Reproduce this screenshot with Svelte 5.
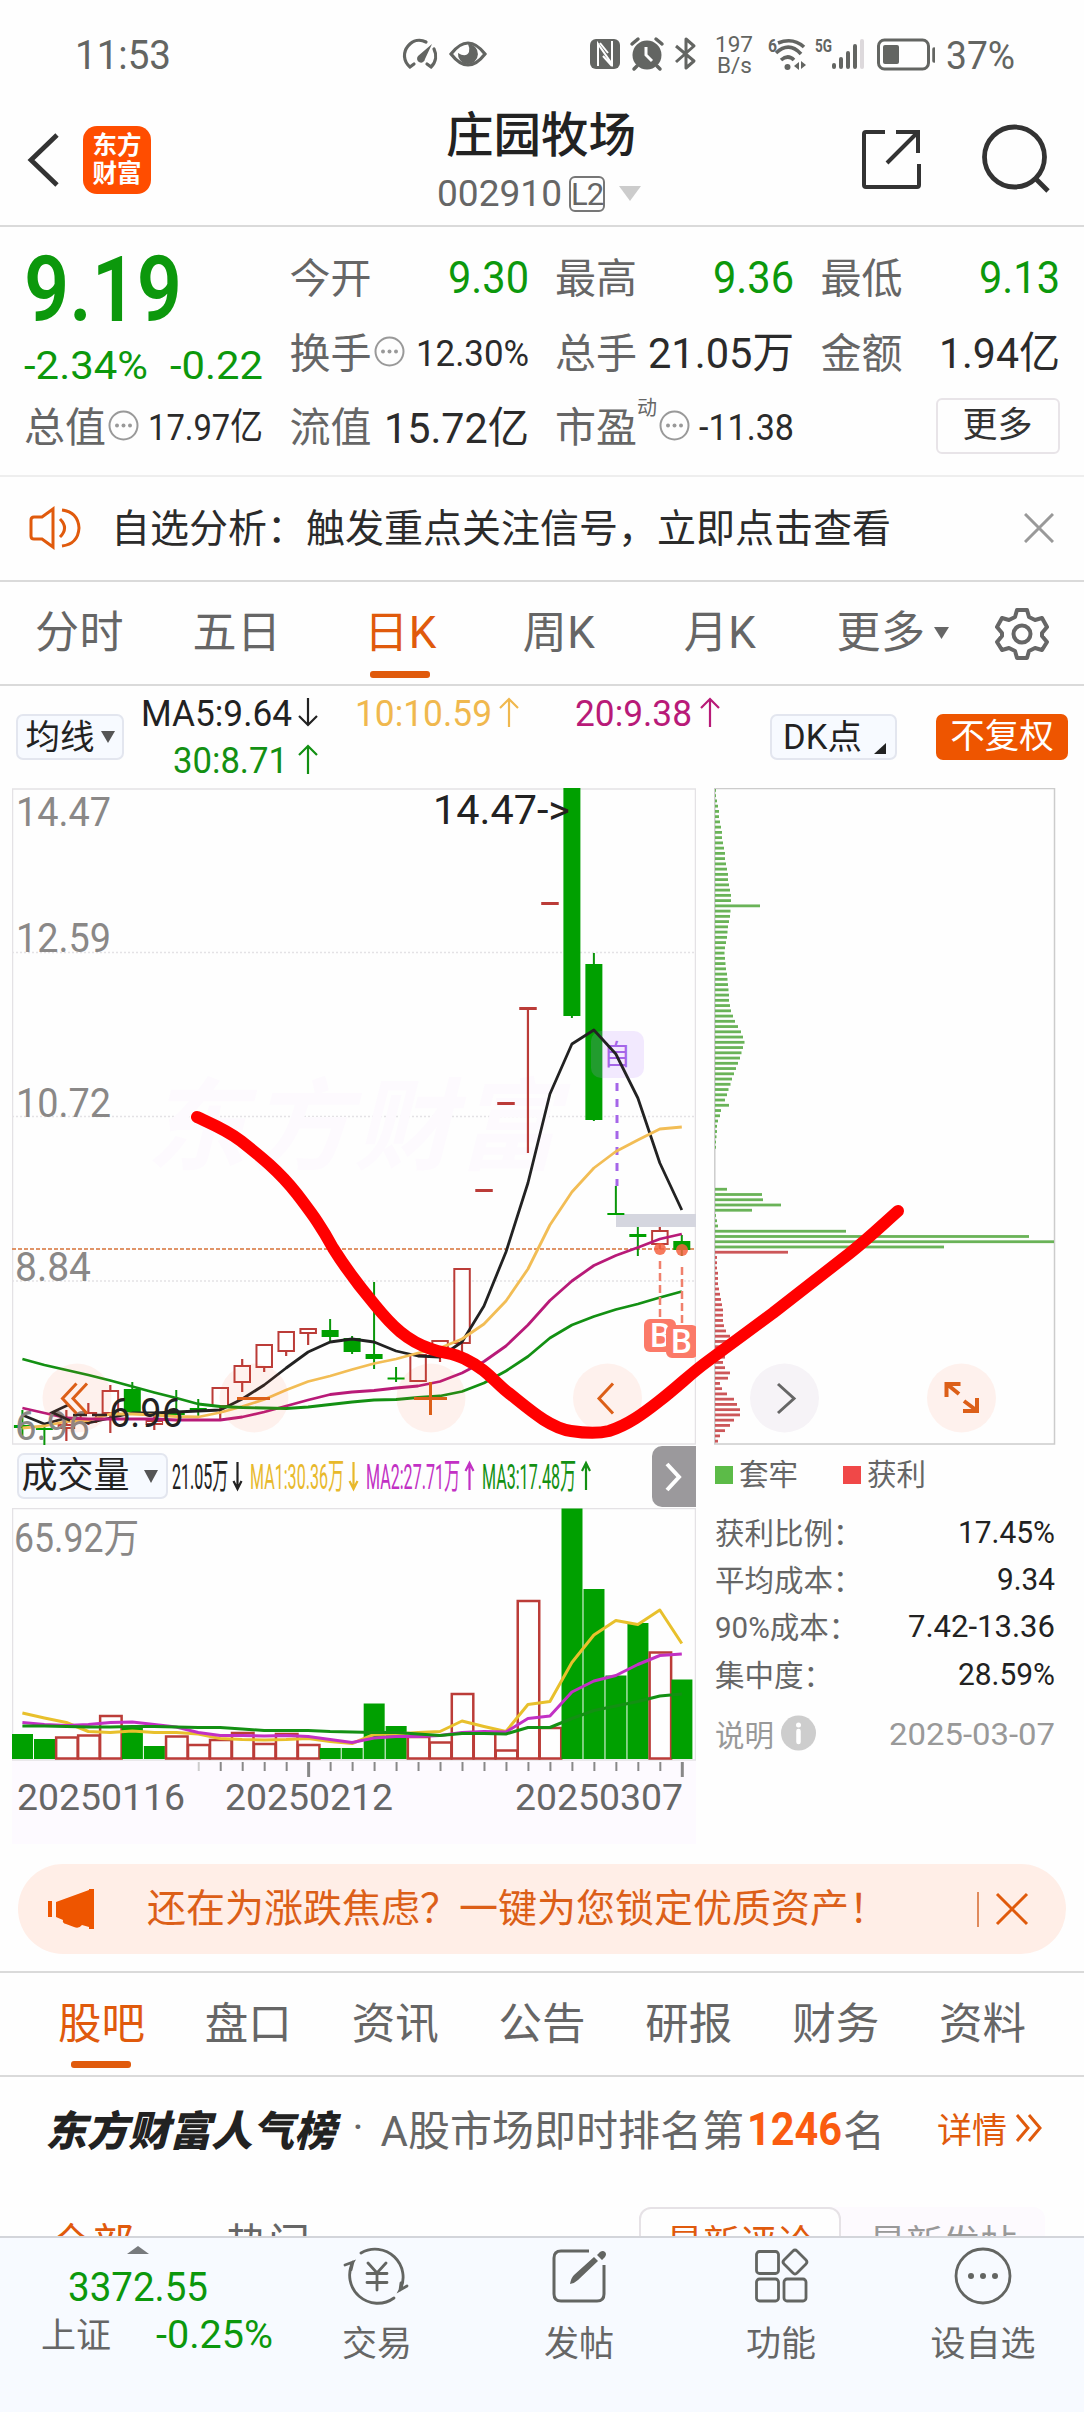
<script>
    const quotes = [
        { label: '今开', value: '9.30', width: 81, size: 44, tone: 'down' },
        { label: '最高', value: '9.36', width: 81, size: 44, tone: 'down' },
        { label: '最低', value: '9.13', width: 81, size: 44, tone: 'down' },
        { label: '换手', value: '12.30%', width: 113, size: 36, tip: true },
        { label: '总手', value: '21.05万', width: 146, size: 43 },
        { label: '金额', value: '1.94亿', width: 121, size: 43 }
    ];

    const periods = [
        { text: '分时', width: 159 },
        { text: '五日', width: 156 },
        { text: '日K', width: 171, active: true },
        { text: '周K', width: 146 },
        { text: '月K', width: 176 }
    ];

    const sections = ['股吧', '盘口', '资讯', '公告', '研报', '财务', '资料'];

    const costs = [
        { label: '获利比例：', value: '17.45%', width: 97 },
        { label: '平均成本：', value: '9.34', width: 58 },
        { label: '90%成本：', value: '7.42-13.36', width: 147 },
        { label: '集中度：', value: '28.59%', width: 97 }
    ];

    // [color, high, body top, body bottom, low]
    const candles = [
        ['g', 1410, 1425, 1428, 1437], ['g', 1425, 1428, 1430, 1445], ['r', 1410, 1425, 1428, 1441],
        ['r', 1403, 1413, 1422, 1425], ['r', 1385, 1391, 1413, 1433], ['g', 1382, 1389, 1412, 1412],
        ['r', 1412, 1421, 1424, 1430], ['g', 1390, 1413, 1415, 1415], ['g', 1399, 1408, 1411, 1416],
        ['r', 1388, 1388, 1406, 1421], ['r', 1359, 1366, 1382, 1392], ['r', 1345, 1345, 1367, 1372],
        ['r', 1332, 1332, 1351, 1356], ['r', 1329, 1329, 1333, 1345], ['g', 1319, 1330, 1337, 1341],
        ['g', 1336, 1338, 1352, 1354], ['g', 1282, 1354, 1359, 1369], ['g', 1367, 1377.5, 1379.5, 1382],
        ['r', 1355, 1355, 1381, 1382], ['r', 1340, 1341, 1355, 1362], ['r', 1269, 1269, 1343, 1353],
        ['r', 1190, 1190, 1191, 1191], ['r', 1103, 1103, 1104, 1104], ['r', 1008, 1008, 1009, 1153],
        ['r', 903, 903, 904, 904], ['g', 788, 788, 1016, 1018], ['g', 953, 964, 1120, 1121],
        ['g', 1186, 1213, 1215, 1215], ['g', 1227, 1234, 1237, 1256], ['r', 1227, 1231, 1244, 1249],
        ['g', 1235, 1241, 1250, 1256]
    ];
    const ma5 = [1415, 1424, 1418, 1423, 1418, 1413, 1413, 1412, 1411, 1410, 1399, 1385, 1368, 1352, 1342, 1339, 1342, 1351, 1356, 1357, 1342, 1306, 1252, 1183, 1094, 1044, 1030, 1054, 1098, 1163, 1210];
    const ma10 = [1428, 1426, 1421.5, 1420.5, 1414, 1414, 1415, 1416.5, 1417, 1412.5, 1406.5, 1399.5, 1390, 1381.5, 1376, 1369.5, 1363.5, 1359, 1353, 1348, 1339, 1324, 1301, 1269, 1225, 1192, 1168, 1151.5, 1140, 1129, 1127];
    const ma20 = [1408, 1413, 1418, 1419, 1419, 1419, 1419, 1420, 1420, 1420, 1417, 1412, 1406, 1400, 1394.5, 1392, 1390.5, 1388, 1386, 1381.5, 1373, 1361.5, 1346, 1325, 1300.5, 1281, 1265.5, 1255.5, 1247.5, 1239, 1234];
    const ma30 = [1359, 1365, 1370, 1375, 1380.5, 1386.5, 1392.5, 1398, 1404, 1406.5, 1407.5, 1408, 1408.5, 1407, 1404.5, 1402, 1400, 1399.5, 1397.5, 1396, 1391.5, 1383, 1371, 1356.5, 1338, 1325, 1316.5, 1309.5, 1304, 1297.5, 1291.5];

    const volumes = [1734, 1739, 1737.5, 1735.5, 1716, 1727, 1746, 1736.5, 1745, 1740, 1733, 1744, 1734, 1745, 1748, 1748, 1703.5, 1726, 1737, 1742.5, 1694, 1733.5, 1750.5, 1601, 1728, 1508.5, 1589, 1675.5, 1623, 1652.5, 1679.5];
    const volumeColors = 'ggrrrggrrrrrrrggggrrrrrrrggggrg';
    const vma1 = [1713, 1718, 1722.5, 1731.5, 1732.5, 1731, 1732.5, 1732.5, 1734, 1738.5, 1739.5, 1740, 1739.5, 1738.5, 1741.5, 1743.5, 1734.5, 1734, 1732.5, 1731.5, 1721, 1726.5, 1731.5, 1704.5, 1701.5, 1662.5, 1635, 1620.5, 1624.5, 1610, 1643.5];
    const vma2 = [1722.5, 1724.5, 1725.5, 1724.5, 1722.5, 1722, 1724.5, 1727, 1732.5, 1735.5, 1735.5, 1736, 1735.5, 1736.5, 1739.5, 1742.5, 1738, 1736.5, 1736.5, 1735.5, 1732.5, 1731.5, 1732, 1718.5, 1716, 1692, 1681, 1675.5, 1664.5, 1655.5, 1654];
    const vma3 = [1726, 1726, 1726.5, 1727, 1727, 1726.5, 1726.5, 1727, 1727.5, 1727.5, 1729, 1730.5, 1730.5, 1730.5, 1731.5, 1732, 1732.5, 1732.5, 1734, 1735.5, 1733.5, 1733.5, 1734, 1727.5, 1727.5, 1718.5, 1710.5, 1706, 1701.5, 1696, 1694];

    // chip distribution, one bar per price step from the top
    const trapped = [
        1, 1, 2, 3, 4, 4, 5, 6, 7, 7, 8, 9, 10, 10, 11, 12, 13, 13, 14, 15, 16, 16, 45,
        15.5, 15, 14, 13, 12.5, 12, 11, 10, 9.5, 10, 10.5, 11, 12, 12.5, 13, 13.5, 14, 14, 15,
        16, 18, 20, 23, 26, 28, 29.5, 28, 26.5, 25, 23, 21, 19, 17, 15.5, 13.5, 12, 10, 14,
        6, 5, 3, 2, 2, 1.5, 1, 1, 0, 0, 0, 0, 0, 0, 0, 12, 47, 48, 66, 37, 1, 2, 3, 131, 314, 339, 229
    ];
    const profit = [73, 2, 2, 2, 3, 3, 3, 4, 5, 6, 7, 8, 8, 8, 9, 11, 15, 16, 14, 12, 10, 8, 10, 15, 13, 5, 7, 12, 19, 22, 25, 25, 19, 15, 10, 5, 3];
    const chips = [...trapped, ...profit];

    const x = (i) => 22.4 + 21.98 * i;
    const line = (ys) => ys.map((y, i) => `${x(i)},${y}`).join(' ');
</script>

{#snippet num(text, width, size)}
    <svg class="num" {width} height={size * 0.71} font-size={size}>
        <text x="0" y={size * 0.71} textLength={width} lengthAdjust="spacingAndGlyphs">{text}</text>
    </svg>
{/snippet}

{#snippet dots()}
    <svg class="dots" width="31" height="31" viewBox="0 0 31 31">
        <circle cx="15.5" cy="15.5" r="14" fill="none" stroke="#999" stroke-width="2" />
        <g fill="#999"><circle cx="9" cy="15.5" r="2" /><circle cx="15.5" cy="15.5" r="2" /><circle cx="22" cy="15.5" r="2" /></g>
    </svg>
{/snippet}

<div class="app">
    <div class="status">
        {@render num('11:53', 96, 40)}
        <svg class="status-mid" width="86" height="32" viewBox="402 38 86 32" fill="none" stroke="#636562" stroke-width="3.2" stroke-linecap="round">
            <path d="M414 64l-4 3C403 61 403 52 408 46S420 39 426 42M434 49C437 55 436 62 431 67l-4-3" />
            <path d="M432 44l-7 15a4 4 0 1 1-7-3z" fill="#636562" stroke="none" />
            <path d="M451 54Q468 32 485 54Q468 76 451 54z" />
            <path d="M468 44a10 10 0 1 1-10 9q8 5 11-1q1-4-1-8z" fill="#636562" stroke="none" />
        </svg>
        <svg class="status-icons" width="350" height="60" viewBox="585 25 350 60" fill="none" stroke="#636562">
            <rect x="590" y="39" width="30" height="30" rx="6" fill="#636562" stroke="none" />
            <path d="M598 66V44l14 20V41M600 43l8 10M603 56l9 10" stroke="#fff" stroke-width="2" />
            <circle cx="647" cy="55" r="14.5" fill="#636562" stroke="none" />
            <path d="M646 47v8l6 6" stroke="#fff" stroke-width="3" />
            <path d="M632 44l6-5M662 44l-6-5M637 66l-3 3M657 66l3 3" stroke-width="3.5" stroke-linecap="round" />
            <path d="M676 46l18 15l-8 7V39l8 7l-18 16" stroke-width="3" stroke-linejoin="round" />
            <g fill="#636562" stroke="none" font-size="23">
                <text x="715" y="51.500" font-size="22.500" textLength="38" lengthAdjust="spacingAndGlyphs">197</text>
                <text x="717" y="73" font-size="22.500" textLength="35" lengthAdjust="spacingAndGlyphs">B/s</text>
                <text class="tiny" x="768" y="52" font-size="19" textLength="9" lengthAdjust="spacingAndGlyphs">6</text>
                <text class="tiny" x="815" y="52" font-size="19" textLength="17" lengthAdjust="spacingAndGlyphs">5G</text>
            </g>
            <path d="M778 43q15-6 26 4M776 53q13-12 25 1M781 60q7-6 13 0" stroke-width="3.6" />
            <circle cx="787.500" cy="67" r="3" fill="#636562" stroke="none" />
            <path d="M799 62v8l-5-4zM801 61v8l5-4z" fill="#636562" stroke="none" />
            <path d="M834 65v2M841 59v8M848 53v14M855 46v21" stroke-width="4" stroke-linecap="round" />
            <path d="M862 41v26" stroke="#ddd9dc" stroke-width="4" stroke-linecap="round" />
            <rect x="878.500" y="40" width="50" height="29" rx="6" stroke-width="3" />
            <rect x="883" y="45" width="16" height="19" rx="2" fill="#636562" stroke="none" />
            <path d="M934 49v12" stroke-width="3.500" stroke-linecap="round" />
        </svg>
        <div class="battery">{@render num('37%', 69, 38)}</div>
    </div>

    <div class="header">
        <svg class="back" width="33" height="56" viewBox="0 0 33 56"><path d="M30 3L4 28l26 25" fill="none" stroke="#333" stroke-width="4.800" /></svg>
        <div class="logo"><span>东方</span><span>财富</span></div>
        <div class="title">
            <div class="name">庄园牧场</div>
            <div class="code">
                {@render num('002910', 125, 37)}
                <span class="level">L2</span>
                <svg width="22" height="15"><path d="M0 0h22L11 15z" fill="#ccc" /></svg>
            </div>
        </div>
        <svg class="share" width="60" height="60" viewBox="0 0 60 60" fill="none" stroke="#333" stroke-width="4">
            <path d="M24 3H5q-2 0-2 2v51q0 2 2 2h51q2 0 2-2V35M35 3h22v21M57 3L26 34" />
        </svg>
        <svg class="search" width="70" height="70" viewBox="0 0 70 70" fill="none" stroke="#333" stroke-width="4.800">
            <circle cx="32.500" cy="33" r="30" /><path d="M53 54l13 13" />
        </svg>
    </div>

    <div class="quote">
        <div class="price-cell">
            <div class="price down">{@render num('9.19', 158, 91)}</div>
            <div class="change down">{@render num('-2.34%', 124, 39)}{@render num('-0.22', 93, 39)}</div>
        </div>
        {#each quotes as q}
            <div class="cell">
                <span class="label">{q.label}</span>
                {#if q.tip}{@render dots()}{/if}
                <span class="value {q.tone}">{@render num(q.value, q.width, q.size)}</span>
            </div>
        {/each}
        <div class="cell"><span class="label">总值</span>{@render dots()}<span class="value">{@render num('17.97亿', 115, 37)}</span></div>
        <div class="cell"><span class="label">流值</span><span class="value">{@render num('15.72亿', 145, 43)}</span></div>
        <div class="cell"><span class="label">市盈</span><sup>动</sup>{@render dots()}<span class="value">{@render num('-11.38', 95, 36)}</span></div>
        <div class="cell end"><button class="more">更多</button></div>
    </div>

    <div class="notice">
        <svg width="53" height="44" viewBox="0 0 53 44" fill="none" stroke="#e05a0c" stroke-width="3">
            <path d="M25 3v38l-11-8H6q-3 0-3-3V14q0-3 3-3h8zM32 13q9 9 0 18M34 4q16 2 17 18q-1 16-17 18" />
        </svg>
        <span class="notice-text">自选分析：触发重点关注信号，立即点击查看</span>
        <svg class="close" width="30" height="30" viewBox="0 0 30 30"><path d="M1 1l28 28M29 1L1 29" stroke="#999" stroke-width="3" /></svg>
    </div>

    <div class="periods">
        {#each periods as p}
            <div class="period" class:active={p.active} style="width: {p.width}px"><span>{p.text}</span></div>
        {/each}
        <div class="period more-period"><span>更多</span><svg width="15" height="12"><path d="M0 0h15L7.500 12z" fill="#666" /></svg></div>
        <svg class="gear" width="54" height="54" viewBox="-27 -27 54 54" fill="none" stroke="#666" stroke-width="4" stroke-linejoin="round">
            <path d="M-5-24H5L7-17L13-14L20-16L25-7L20-1V2L25 8L20 16L13 14L7 17L5 24H-5L-7 17L-13 14L-20 16L-25 8L-20 2V-1L-25-7L-20-16L-13-14L-7-17Z" />
            <circle r="8.500" />
        </svg>
    </div>

    <div class="ma-row">
        <div class="chip ma-chip">均线<svg width="14" height="12"><path d="M0 0h14L7 12z" fill="#555" /></svg></div>
        <svg class="ma-values" width="584" height="100" viewBox="136 686 584 100" font-size="37">
            <g fill="#222"><text x="141" y="725.500" textLength="151" lengthAdjust="spacingAndGlyphs">MA5:9.64</text><path class="arrow" d="M308 698v27m-9-9l9 9l9-9" stroke="#222" /></g>
            <g fill="#f0b84e"><text x="355" y="725.500" textLength="137" lengthAdjust="spacingAndGlyphs">10:10.59</text><path class="arrow" d="M509 727v-28m-9 9l9-9l9 9" stroke="#f0b84e" /></g>
            <g fill="#b81a78"><text x="575" y="725.500" textLength="117" lengthAdjust="spacingAndGlyphs">20:9.38</text><path class="arrow" d="M710 727v-28m-9 9l9-9l9 9" stroke="#b81a78" /></g>
            <g fill="#139013"><text x="173" y="773" textLength="115" lengthAdjust="spacingAndGlyphs">30:8.71</text><path class="arrow" d="M308 774v-28m-9 9l9-9l9 9" stroke="#139013" /></g>
        </svg>
        <div class="chip dk-chip">DK点<svg width="12" height="11"><path d="M12 0v11H0z" fill="#222" /></svg></div>
        <div class="chip solid">不复权</div>
    </div>

    <div class="charts">
        <div class="left">
            <svg class="kline" width="684" height="657" viewBox="12 788 684 657">
                <g fill="none" stroke="#e4e2e5" stroke-width="1.500">
                    <rect x="12.500" y="789" width="683" height="655" />
                    <path d="M12 952.500h684M12 1116.500h684M12 1281h684" stroke-dasharray="2 2" />
                </g>
                <text class="mark" x="146" y="1162" textLength="412">东方财富</text>
                <path d="M12 1249h684" stroke="#e09468" stroke-width="2" stroke-dasharray="4 2" />
                <rect x="616" y="1214" width="80" height="13" fill="#d5d6df" />
                {#each candles as [color, high, top, bottom, low], i}
                    {#if color === 'g'}
                        <path d="M{x(i)} {high}V{low}" stroke="#0a960a" stroke-width="2" />
                        <rect x={x(i) - 8.5} y={top} width="17" height={bottom - top} fill="#00a000" />
                    {:else}
                        <path d="M{x(i)} {high}V{top}M{x(i)} {bottom}V{low}" stroke="#bb3c38" stroke-width="2.200" />
                        <rect x={x(i) - 7.7} y={top} width="15.500" height={bottom - top} fill="#fff" stroke="#bb3c38" stroke-width="2" />
                    {/if}
                {/each}
                <rect x="591" y="1031" width="53" height="47" rx="10" fill="#be8cff" fill-opacity="0.18" />
                <text x="603" y="1065" font-size="28" fill="#a566e8">自</text>
                <path d="M617 1083v103" stroke="#a566e8" stroke-width="3" stroke-dasharray="8 8" />
                <g fill="none" stroke-width="2.800" stroke-linejoin="round">
                    <polyline points={line(ma5)} stroke="#222" />
                    <polyline points={line(ma10)} stroke="#f2bd55" />
                    <polyline points={line(ma20)} stroke="#b81a78" />
                    <polyline points={line(ma30)} stroke="#139013" />
                </g>
                <g fill="#8a8887" font-size="40">
                    <text x="16" y="826" textLength="95" lengthAdjust="spacingAndGlyphs">14.47</text>
                    <text x="16" y="952" textLength="95" lengthAdjust="spacingAndGlyphs">12.59</text>
                    <text x="16" y="1117" textLength="95" lengthAdjust="spacingAndGlyphs">10.72</text>
                    <text x="15" y="1281" textLength="76" lengthAdjust="spacingAndGlyphs">8.84</text>
                    <text x="15" y="1440" textLength="75" lengthAdjust="spacingAndGlyphs">6.96</text>
                </g>
                <text x="433" y="824" font-size="40" fill="#222" textLength="137" lengthAdjust="spacingAndGlyphs">14.47-&gt;</text>
                <path d="M68 1405l-16 7.500l18 8M73 1415h14m5 0h15" fill="none" stroke="#222" stroke-width="2.500" />
                <text x="109" y="1427" font-size="40" fill="#222" textLength="74" lengthAdjust="spacingAndGlyphs">6.96</text>
                <g fill="#f4613f" fill-opacity="0.85"><circle cx="660" cy="1249" r="6" /><circle cx="682" cy="1250" r="6" /></g>
                <path d="M660 1261v57M682 1267v57" stroke="#f0806c" stroke-width="2.500" stroke-dasharray="8 4" />
                <g class="buy">
                    <rect x="644" y="1319" width="32" height="33" rx="6" /><text x="650" y="1347">B</text>
                    <rect x="666" y="1325" width="32" height="33" rx="6" /><text x="671" y="1353">B</text>
                </g>
            </svg>

            <div class="vol-row">
                <div class="chip vol-chip">成交量<svg width="14" height="13"><path d="M0 0h14L7 13z" fill="#555" /></svg></div>
                <svg width="480" height="60" viewBox="172 1446 480 60" font-size="36">
                    <g fill="#222"><text transform="translate(172 1489) scale(.445 1)">21.05万</text><path class="arrow" d="M237.500 1462v27m-4-8l4 8l4-8" stroke="#222" /></g>
                    <g fill="#e8b92c"><text transform="translate(250 1489) scale(.447 1)">MA1:30.36万</text><path class="arrow" d="M353.500 1462v27m-4-8l4 8l4-8" stroke="#e8b92c" /></g>
                    <g fill="#c231c4"><text transform="translate(366 1489) scale(.447 1)">MA2:27.71万</text><path class="arrow" d="M469.500 1490v-27m-4 8l4-8l4 8" stroke="#c231c4" /></g>
                    <g fill="#139013"><text transform="translate(482 1489) scale(.447 1)">MA3:17.48万</text><path class="arrow" d="M586 1490v-27m-4 8l4-8l4 8" stroke="#139013" /></g>
                </svg>
                <div class="handle"><svg width="18" height="30" viewBox="0 0 18 30"><path d="M2 2l12 13L2 28" fill="none" stroke="#fff" stroke-width="4" /></svg></div>
            </div>

            <svg class="volume" width="684" height="336" viewBox="12 1508 684 336">
                <rect x="12" y="1760" width="684" height="84" fill="#fdfaff" />
                <rect x="12.500" y="1508.500" width="683" height="251.500" fill="#fefefe" stroke="#e4e2e5" stroke-width="1.500" />
                <text x="14" y="1552" font-size="40" fill="#8a8887" textLength="125" lengthAdjust="spacingAndGlyphs">65.92万</text>
                {#each volumes as top, i}
                    {#if volumeColors[i] === 'g'}
                        <rect x={x(i) - 10.4} y={top} width="21" height={1759 - top} fill="#00a000" />
                    {:else}
                        <rect x={x(i) - 10.2} y={top} width="21.500" height={1758.5 - top} fill="#fefefe" stroke="#bb3c38" stroke-width="2.500" />
                    {/if}
                {/each}
                <g fill="none" stroke-width="3" stroke-linejoin="round">
                    <polyline points={line(vma1)} stroke="#e8c02c" />
                    <polyline points={line(vma2)} stroke="#c231c4" />
                    <polyline points={line(vma3)} stroke="#139013" />
                </g>
                {#each volumes as _, i}
                    {#if i > 7}
                        <path d="M{x(i) + 0.5} 1762v{i === 13 || i === 30 ? 15 : 9}" stroke={i === 8 ? '#ccc' : '#888'} stroke-width={i === 13 || i === 30 ? 3 : 2} />
                    {/if}
                {/each}
                <g font-size="37" fill="#666">
                    <text x="17" y="1810" textLength="168" lengthAdjust="spacingAndGlyphs">20250116</text>
                    <text x="225" y="1810" textLength="168" lengthAdjust="spacingAndGlyphs">20250212</text>
                    <text x="515" y="1810" textLength="168" lengthAdjust="spacingAndGlyphs">20250307</text>
                </g>
            </svg>
        </div>

        <div class="right">
            <svg width="342" height="657" viewBox="714 788 342 657">
                <rect x="714.800" y="788.500" width="339.700" height="655.500" fill="none" stroke="#ccc" stroke-width="1.500" />
                {#each chips as length, k}
                    <rect x="715" y={789 + k * 5.248} width={length} height="2.800" fill={k < trapped.length ? '#6ab358' : '#cc5759'} />
                {/each}
            </svg>
            <div class="legend"><i class="green"></i>套牢<i class="red"></i>获利</div>
            {#each costs as c}
                <div class="cost"><span>{c.label}</span><b>{@render num(c.value, c.width, 31)}</b></div>
            {/each}
            <div class="cost note">
                <span>说明</span>
                <svg class="info" width="35" height="36" viewBox="0 0 35 36"><circle cx="17.500" cy="18" r="17.500" fill="#cdcdcd" /><circle cx="17.500" cy="10" r="2.500" fill="#fff" /><path d="M17.500 16v11" fill="none" stroke="#fff" stroke-width="4.500" stroke-linecap="round" /></svg>
                <b>{@render num('2025-03-07', 166, 31.5)}</b>
            </div>
        </div>

        <svg class="overlay" width="1084" height="656" viewBox="0 788 1084 656" fill="none">
            <g fill="#ff5a28" fill-opacity="0.08">
                <circle cx="77" cy="1398" r="34.500" /><circle cx="254" cy="1398" r="34.500" /><circle cx="431" cy="1398" r="34.500" /><circle cx="607.500" cy="1398" r="34.500" /><circle cx="961.500" cy="1398" r="34.500" />
            </g>
            <circle cx="784.500" cy="1398" r="34.500" fill="#f6f3f7" />
            <g stroke="#dc5f18" stroke-width="3">
                <path d="M76.500 1383.500l-14 15l14 15M87 1383.500l-14 15l14 15M237 1398.500h33M414 1398.500h33M430.500 1382v33M613 1383.500l-14 15l14 15" />
                <path d="M946.500 1397v-13h14M948 1385l11 9M964 1401l12 9M963 1411h14v-13" stroke-width="4" />
            </g>
            <path d="M778 1384l16 14.500l-16 14.500" stroke="#666" stroke-width="3" />
            <path d="M197 1117C212 1124 227 1130 241 1141C260 1156 279 1171 297 1194C312 1214 320 1224 333 1248C348 1272 359 1286 375 1305C392 1326 407 1341 431 1349C445 1354 452 1352 465 1359C488 1370 496 1384 510 1394C530 1410 550 1428 571 1431C584 1433 597 1434 609 1431C628 1425 644 1413 658 1402C680 1385 690 1374 708 1361L773 1313L850 1253C870 1237 880 1227 898 1211" stroke="#f00" stroke-width="12" stroke-linecap="round" stroke-linejoin="round" />
        </svg>
    </div>

    <div class="banner">
        <svg width="48" height="40" viewBox="0 0 48 40" fill="#ee5500"><path d="M1 12h4v16H1zM9 13L42 1V0h5v40h-5v-2l-7-2q-3 4-8 2l-8-3q-4-1-3-4l-7-3z" /></svg>
        <span class="banner-text">还在为涨跌焦虑？一键为您锁定优质资产！</span>
        <span class="divider"></span>
        <svg width="34" height="34" viewBox="0 0 34 34"><path d="M2 2l30 30M32 2L2 32" stroke="#e05a0c" stroke-width="3" /></svg>
    </div>

    <div class="sections">
        {#each sections as name, i}
            <div class="section" class:active={i === 0}><span>{name}</span></div>
        {/each}
    </div>

    <div class="rank">
        <span class="rank-title">东方财富人气榜</span>
        <span class="dot">·</span>
        <span>A股市场即时排名第</span>
        <span class="rank-no">{@render num('1246', 95, 47)}</span>
        <span>名</span>
        <span class="detail">详情<svg width="29" height="30" viewBox="0 0 29 30"><path d="M2 2l11 13L2 28M14 2l11 13l-11 13" fill="none" stroke="#e05a0c" stroke-width="3" /></svg></span>
    </div>

    <div class="filters">
        <span class="filter on">全部</span>
        <span class="filter">热门</span>
        <div class="sort"><span class="sort-item on">最新评论</span><span class="sort-item">最新发帖</span></div>
    </div>

    <div class="nav">
        <div class="index">
            <svg width="22" height="8"><path d="M0 8L11 0l11 8z" fill="#777a7d" /></svg>
            <div class="down">{@render num('3372.55', 140, 41)}</div>
            <div class="index-row"><span>上证</span><span class="down">{@render num('-0.25%', 117, 38)}</span></div>
        </div>
        <div class="nav-item">
            <svg width="68" height="60" viewBox="-34 -30 68 60" fill="none" stroke="#636562" stroke-width="2.800" stroke-linecap="round">
                <path d="M-16-23A28 28 0 0 1 23 14l7-4M23 14l1-7M17 22A28 28 0 0 1-24-14l-8 3M-24-14l-2 8M-9-13L0-3L9-13M-10-2.500h20M-10 6.500h20M0-3v17" />
            </svg>
            <span>交易</span>
        </div>
        <div class="nav-item">
            <svg width="68" height="60" viewBox="-34 -30 68 60" fill="none" stroke="#636562" stroke-width="3">
                <path d="M10-25H-18q-7 0-7 7V18q0 7 7 7H18q7 0 7-7V-11" />
                <path d="M-9 8q1-6 4-9L15-19l4 4L-1 4q-3 3-8 4zM18-21l3-3q3-2 5 0q2 2 0 5l-3 3z" fill="#636562" stroke="none" />
            </svg>
            <span>发帖</span>
        </div>
        <div class="nav-item">
            <svg width="68" height="60" viewBox="-34 -30 68 60" fill="none" stroke="#636562" stroke-width="2.800" stroke-linejoin="round">
                <rect x="-24.500" y="-24.500" width="22" height="22" rx="3" /><rect x="-24.500" y="3" width="22" height="22" rx="3" /><rect x="3" y="3" width="22" height="22" rx="3" />
                <path d="M12-25q2-2 4 0l9 9q2 2 0 4l-9 9q-2 2-4 0l-9-9q-2-2 0-4z" />
            </svg>
            <span>功能</span>
        </div>
        <div class="nav-item">
            <svg width="68" height="60" viewBox="-34 -30 68 60"><circle r="27" fill="none" stroke="#636562" stroke-width="2.800" /><g fill="#636562"><circle cx="-12" r="3" /><circle r="3" /><circle cx="12" r="3" /></g></svg>
            <span>设自选</span>
        </div>
    </div>
</div>

<style>
    :global(body) {
        margin: 0;
        background: #fefefe;
    }
    .app {
        width: 1084px;
        height: 2412px;
        overflow: hidden;
        background: #fefefe;
        color: #666;
        font-family: Roboto, "Noto Sans CJK SC", sans-serif;
        box-sizing: border-box;
    }
    .app * {
        box-sizing: border-box;
    }
    svg {
        display: block;
        flex: none;
    }
    svg text {
        white-space: pre;
    }
    .num {
        overflow: visible;
        fill: currentColor;
    }
    .down {
        color: #0c980c;
    }
    .arrow {
        fill: none;
        stroke-width: 2.2;
    }
    .tiny {
        font-weight: 700;
    }

    .status {
        display: flex;
        align-items: center;
        height: 110px;
        padding-left: 75px;
        color: #636562;
    }
    .status-mid {
        margin: 0 0 2px 231px;
    }
    .status-icons {
        margin-left: 97px;
    }
    .battery {
        margin-left: 11px;
    }

    .header {
        display: flex;
        align-items: center;
        height: 117px;
        padding: 0 32px 16px 27px;
        border-bottom: 2px solid #dadada;
    }
    .back {
        margin-top: 1px;
    }
    .logo {
        display: flex;
        flex-direction: column;
        align-items: center;
        justify-content: center;
        width: 68px;
        height: 68px;
        margin: 0 0 0 23px;
        border-radius: 14px;
        background: #ff4d00;
        color: #fff;
        font-size: 24.5px;
        font-weight: 700;
        line-height: 28px;
    }
    .title {
        width: 200px;
        margin-left: 286px;
        padding-top: 10px;
    }
    .name {
        padding-left: 9px;
        color: #222;
        font-size: 47.5px;
        font-weight: 500;
        line-height: 58px;
        white-space: nowrap;
    }
    .code {
        display: flex;
        align-items: center;
        height: 58px;
    }
    .level {
        width: 41px;
        height: 36px;
        margin: 0 11px 0 7px;
        border: 2px solid #777;
        border-radius: 6px;
        font-size: 31px;
        line-height: 33px;
        letter-spacing: -1px;
        text-align: center;
    }
    .code svg:last-child {
        margin-left: 3px;
    }
    .share {
        margin: 0 0 1px 224px;
    }
    .search {
        margin: 0 0 1px 61px;
    }

    .quote {
        display: grid;
        grid-template-columns: 239px 239px 239px 239px;
        grid-template-rows: 75px 75px 74px;
        column-gap: 26.5px;
        height: 250px;
        padding: 13px 23px 0 24px;
        border-bottom: 2px solid #eee;
    }
    .price-cell {
        grid-row: span 2;
    }
    .price {
        padding: 16px 0 0 0;
        font-weight: 600;
    }
    .change {
        display: flex;
        justify-content: space-between;
        margin-top: 30px;
    }
    .cell {
        display: flex;
        align-items: center;
        white-space: nowrap;
    }
    .label {
        margin-top: -6px;
        font-size: 41px;
    }
    .dots {
        margin: -3px 0 0 2px;
    }
    sup {
        align-self: flex-start;
        width: 20px;
        margin-top: 6px;
        font-size: 20px;
        line-height: 24px;
    }
    .value {
        margin-left: auto;
        color: #2b2b2b;
    }
    .value.down {
        color: #0c980c;
    }
    .end {
        justify-content: flex-end;
    }
    .more {
        width: 124px;
        height: 56px;
        margin-top: -3px;
        padding: 0;
        border: 2px solid #e8e4e8;
        border-radius: 6px;
        background: #fefefe;
        color: #333;
        font: inherit;
        font-size: 35px;
        line-height: 48px;
    }

    .notice {
        display: flex;
        align-items: center;
        height: 105px;
        padding: 0 30px 2px 28px;
        border-bottom: 2px solid #dadada;
    }
    .notice-text {
        flex: 1;
        padding: 0 0 5px 30px;
        color: #2b2b2b;
        font-size: 39px;
    }

    .periods {
        display: flex;
        height: 104px;
        border-bottom: 2px solid #dadada;
        font-size: 44px;
        line-height: 105px;
    }
    .period {
        display: flex;
        flex: none;
        justify-content: center;
        align-items: center;
        letter-spacing: 0.5px;
    }
    .active span {
        position: relative;
        color: #e05a0c;
    }
    .active span::after {
        content: '';
        position: absolute;
        bottom: 8px;
        left: 50%;
        width: 60px;
        height: 7px;
        margin-left: -30px;
        border-radius: 3px;
        background: #e05a0c;
    }
    .more-period {
        gap: 8px;
        width: 169px;
    }
    .gear {
        margin: 25px 0 0 18px;
    }

    .ma-row {
        display: flex;
        align-items: flex-start;
        height: 102px;
        padding-left: 16px;
    }
    .chip {
        display: flex;
        align-items: center;
        justify-content: center;
        height: 46px;
        margin-top: 28px;
        border: 2px solid #e3e6ef;
        border-radius: 7px;
        background: #f7faff;
        color: #222;
        font-size: 34.5px;
        line-height: 42px;
        white-space: nowrap;
    }
    .ma-chip {
        gap: 6px;
        width: 108px;
    }
    .ma-values {
        margin: 0 0 0 12px;
    }
    .dk-chip {
        gap: 12px;
        width: 127px;
        margin-left: 50px;
        padding-left: 2px;
    }
    .dk-chip svg {
        margin-top: 22px;
    }
    .solid {
        width: 132px;
        margin-left: 39px;
        padding-bottom: 2px;
        border: 0;
        background: #ee5500;
        color: #fff;
        line-height: 44px;
    }

    .charts {
        position: relative;
        display: flex;
        height: 1056px;
        padding-left: 12px;
    }
    .left {
        width: 684px;
    }
    .overlay {
        position: absolute;
        top: 0;
        left: 0;
    }
    .mark {
        fill: #fdfafe;
        font-size: 100px;
        font-weight: 700;
        font-style: italic;
    }
    .buy rect {
        fill: #fb7a68;
    }
    .buy text {
        fill: #fff;
        font-size: 33px;
        font-weight: 500;
    }
    .vol-row {
        display: flex;
        height: 63px;
    }
    .vol-chip {
        gap: 14px;
        width: 151px;
        margin: 8px 4px 0 5px;
        padding: 0 6px 0 0;
        font-size: 36px;
    }
    .handle {
        display: flex;
        align-items: center;
        justify-content: center;
        width: 44px;
        height: 61px;
        margin: 1px 0 0 0;
        border-radius: 10px 0 0 10px;
        background: #9b999c;
    }
    .vol-row > svg {
        margin-top: 1px;
    }

    .right {
        width: 342px;
        margin-left: 18px;
    }
    .legend {
        display: flex;
        align-items: center;
        height: 58px;
        padding-bottom: 4px;
        font-size: 29.5px;
    }
    .legend i {
        width: 18px;
        height: 18px;
        margin: 5px 6px 0 1px;
    }
    .green {
        background: #5cbb48;
    }
    .legend .red {
        margin-left: 45px;
        background: #f04848;
    }
    .cost {
        display: flex;
        align-items: center;
        height: 47.3px;
        padding: 8px 0 0 1px;
        font-size: 29.5px;
    }
    .cost b {
        margin-left: auto;
        padding: 2px 1px 0 0;
        color: #222;
        font-weight: 400;
    }
    .note,
    .note b {
        color: #999;
    }
    .note {
        height: 67px;
        padding-top: 14px;
    }
    .info {
        margin-left: 7px;
    }

    .banner {
        display: flex;
        align-items: center;
        height: 90px;
        margin: 20px 18px 17px;
        padding: 0 37px 0 29px;
        border-radius: 45px;
        background: #ffeee7;
        color: #dc5f18;
        font-size: 39px;
    }
    .banner-text {
        flex: 1;
        padding: 0 0 9px 52px;
    }
    .divider {
        width: 2px;
        height: 35px;
        margin-right: 16px;
        background: #e08a5c;
    }

    .sections {
        display: flex;
        height: 106px;
        padding: 0 28px;
        border-top: 2px solid #dadada;
        border-bottom: 2px solid #dadada;
        font-size: 43.5px;
        line-height: 104px;
    }
    .section {
        flex: 1;
        text-align: center;
    }
    .section span {
        display: block;
    }
    .section.active span::after {
        bottom: 9px;
    }

    .rank {
        display: flex;
        align-items: center;
        height: 113px;
        padding: 0 40px 12px 45px;
        font-size: 42px;
        white-space: nowrap;
    }
    .rank-title {
        color: #222;
        font-size: 41.5px;
        font-weight: 900;
        font-style: italic;
    }
    .dot {
        padding: 0 17px 0 17px;
    }
    .rank-no {
        padding: 3px 1px 0 3px;
        color: #fa5c10;
        font-weight: 700;
    }
    .detail {
        display: flex;
        align-items: center;
        gap: 8px;
        margin-left: auto;
        color: #e05a0c;
        font-size: 35px;
    }

    .filters {
        display: flex;
        height: 46px;
        padding: 17px 39px 0 50px;
        overflow: hidden;
    }
    .filter {
        width: 176px;
        height: 60px;
        margin-top: 1px;
        padding-top: 7px;
        font-size: 42px;
        line-height: 60px;
    }
    .on {
        color: #e05a0c;
    }
    .sort {
        display: flex;
        height: 70px;
        margin-left: auto;
        border-radius: 12px;
        background: #fdfafe;
    }
    .sort-item {
        width: 204px;
        font-size: 37px;
        line-height: 76px;
        text-align: center;
        color: #999;
    }
    .sort-item.on {
        width: 202px;
        border: 2px solid #e6e2e6;
        border-radius: 12px;
        background: #fefefe;
        color: #e05a0c;
        line-height: 72px;
    }

    .nav {
        display: flex;
        height: 176px;
        border-top: 2px solid #d3d5da;
        background: #f7faff;
        font-size: 35px;
    }
    .index {
        display: flex;
        flex-direction: column;
        align-items: center;
        width: 276px;
        padding-top: 8px;
    }
    .index .down {
        margin-top: 18px;
    }
    .index-row {
        display: flex;
        align-items: center;
        gap: 45px;
        height: 50px;
        margin: 6px 0 0 38px;
    }
    .index-row .down {
        margin-top: 5px;
    }
    .nav-item {
        display: flex;
        flex-direction: column;
        align-items: center;
        width: 202px;
        padding-top: 8px;
    }
    .nav-item span {
        margin-top: 13px;
        line-height: 52px;
    }
</style>
